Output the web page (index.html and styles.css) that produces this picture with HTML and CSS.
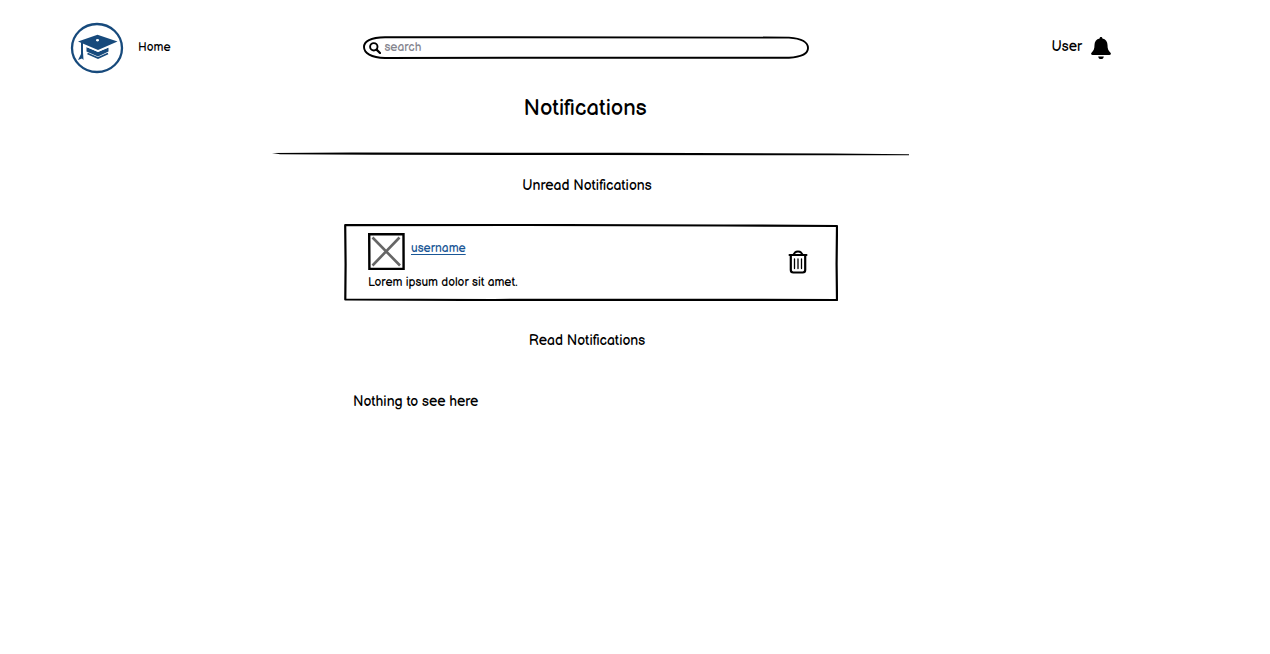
FILE: index.html
```html
<!DOCTYPE html>
<html lang="en">
<head>
  <meta charset="utf-8">
  <meta name="viewport" content="width=device-width, initial-scale=1">
  <title>Notifications</title>
  <link rel="stylesheet" href="styles.css">
</head>
<body>
  <div class="page">
    <header class="topbar">
      <nav class="topbar-nav">
        <a class="logo" href="#" aria-label="Home page">
          <svg class="logo-icon" viewBox="0 0 54 52" aria-hidden="true">
            <ellipse cx="27" cy="26" rx="25" ry="24" fill="none" stroke="#174a7c" stroke-width="2.300"/>
            <path fill="#174a7c" fill-rule="evenodd" d="M27.500 12.800 L47.500 19.500 L28 28 L8 19.500 Z M27.500 17 a1.600 1.200 0 1 0 .01 0 Z"/>
            <path fill="#174a7c" d="M16.500 25 L28 30 L38.500 25.500 V29.500 L28 34.500 L16.500 29.500 Z"/>
            <path fill="none" stroke="#fff" stroke-width="1" d="M15 24 L28 29.400 L41 24"/>
            <path fill="none" stroke="#174a7c" stroke-width="1.800" d="M17.500 31.500 L28 36 L38 31.500"/>
            <path fill="#174a7c" d="M11 20 L13 21 V30 L13.500 38 L12 36.500 L8 38 L11 32 Z"/>
          </svg>
        </a>
        <a class="nav-link" href="#">Home</a>
      </nav>
      <form class="search" role="search">
        <svg class="frame" viewBox="0 0 446 23" preserveAspectRatio="none" aria-hidden="true">
          <path d="M22 1.200 L426 1.600 C438 2.500 445 6 445 12 C445 18 438 21 426 21.700 L150 21.800 L22 22 C8 21.500 1 17 1 11 C1 5 9 1.500 22 1.200 Z" fill="#fff" stroke="#000" stroke-width="1.900"/>
        </svg>
        <svg class="search-icon" viewBox="0 0 12 12" aria-hidden="true">
          <circle cx="4.800" cy="4.800" r="3.700" fill="none" stroke="#000" stroke-width="1.900"/>
          <path d="M7.600 7.600 L11 11" stroke="#000" stroke-width="2.200" stroke-linecap="round"/>
        </svg>
        <input class="search-input" type="search" placeholder="search" aria-label="search">
      </form>
      <div class="account">
        <a class="account-link" href="#">User</a>
        <button class="icon-button" type="button" aria-label="Show notifications">
          <svg class="bell-icon" viewBox="0 0 20 22" aria-hidden="true">
            <path d="M10 0 C10.900 0 11.400 .6 11.400 1.600 C14.700 2.300 16.500 4.800 16.500 8 C16.500 12 17.300 13.500 19.300 15.500 C20.500 16.900 19.800 18 18.500 18 H1.500 C.2 18 -.5 16.900 .7 15.500 C2.700 13.500 3.500 12 3.500 8 C3.500 4.800 5.300 2.300 8.600 1.600 C8.600 .6 9.100 0 10 0 Z M7.200 19.400 H12.800 C12.700 21 11.600 22 10 22 C8.400 22 7.300 21 7.200 19.400 Z"/>
          </svg>
        </button>
      </div>
    </header>

    <main class="content">
      <h1 class="title">Notifications</h1>
      <svg class="rule" viewBox="0 0 638 4" preserveAspectRatio="none" aria-hidden="true">
        <path d="M0 .9 L80 .6 L350 .8 L560 1.600 L637 2.300 V3.300 L560 3.200 L320 3 L100 2.700 L8 2.200 Z"/>
      </svg>

      <section class="group">
        <h2 class="subtitle">Unread Notifications</h2>
        <article class="card">
          <svg class="frame" viewBox="0 0 494 77" preserveAspectRatio="none" aria-hidden="true">
            <path d="M1.200 1.200 L180 1 L380 1.500 L493 2 L492.600 40 L493 76 L250 75.800 L150 76 L1.300 75.500 L1.600 40 Z" fill="#fff" stroke="#000" stroke-width="2.200" stroke-linejoin="round"/>
          </svg>
          <div class="message">
            <div class="author">
              <svg class="avatar" viewBox="0 0 37 37" role="img" aria-label="Profile picture">
                <path d="M1.200 1.300 L35.500 1 L35.600 35.800 L1.400 36 Z" fill="#fff" stroke="#000" stroke-width="2.400"/>
                <path d="M4.500 4.500 L32 32.500 M31.500 4.500 L4.500 32.500" fill="none" stroke="#666" stroke-width="2.600"/>
              </svg>
              <a class="username" href="#">username</a>
            </div>
            <p class="message-text">Lorem ipsum dolor sit amet.</p>
          </div>
          <button class="icon-button" type="button" aria-label="Delete notification">
            <svg class="trash-icon" viewBox="0 0 20 24" fill="none" stroke="#000" stroke-linecap="round" aria-hidden="true">
              <path d="M1.500 5 H18.500 M5.500 4.500 L7 2.500 Q8 1.500 10 1.500 Q12 1.500 13 2.500 L14.500 4.500" stroke-width="2" stroke-linejoin="round"/>
              <path d="M2.800 5.500 V20 Q2.800 22.500 5.300 22.500 H14.700 Q17.200 22.500 17.200 20 V5.500" stroke-width="2.200"/>
              <path d="M6.500 9 V18.500 M10 9 V18.500 M13.500 9 V18.500" stroke-width="1.300"/>
            </svg>
          </button>
        </article>
      </section>

      <section class="group">
        <h2 class="subtitle">Read Notifications</h2>
        <p class="empty">Nothing to see here</p>
      </section>
    </main>
  </div>
</body>
</html>
```
FILE: styles.css
```css
* {
  box-sizing: border-box;
}

body {
  margin: 0;
  background: #fff;
  color: #000;
  font-family: "Balsamiq Sans", "Liberation Sans", Arial, sans-serif;
  font-size: 12px;
  line-height: 16px;
}

h1, h2, p {
  margin: 0;
  font-weight: 400;
}

svg {
  display: block;
}

.page {
  max-width: 1182px;
}

.topbar {
  display: grid;
  grid-template-columns: 36fr minmax(160px, 446px) 37fr;
  align-items: center;
  padding: 22px 71px 0 70px;
}

.topbar-nav,
.account {
  display: flex;
  align-items: center;
}

.topbar-nav {
  gap: 14px;
}

.account {
  justify-content: flex-end;
  gap: 9px;
}

.logo-icon {
  width: 54px;
  height: 52px;
}

.nav-link,
.account-link {
  color: #000;
  text-decoration: none;
}

.account-link {
  padding-bottom: 2px;
  font-size: 14px;
}

.icon-button {
  padding: 0;
  border: 0;
  background: none;
  cursor: pointer;
}

.bell-icon {
  width: 20px;
  height: 22px;
}

.frame {
  position: absolute;
  inset: 0;
  z-index: -1;
  width: 100%;
  height: 100%;
}

.search {
  position: relative;
  z-index: 0;
  display: flex;
  align-items: center;
  gap: 3px;
  height: 23px;
  margin-bottom: 1px;
  padding: 0 16px 0 6px;
}

.search-icon {
  flex: none;
  width: 12px;
  height: 12px;
}

.search-input {
  flex: 1;
  min-width: 0;
  padding: 0;
  border: 0;
  outline: 0;
  background: transparent;
  font: inherit;
}

.search-input::placeholder {
  color: #85858f;
  opacity: 1;
}

.content {
  display: flex;
  flex-direction: column;
  align-items: center;
  padding: 21px 16px;
}

.title {
  padding-right: 12px;
  font-size: 22px;
  line-height: 28px;
}

.rule {
  width: 100%;
  max-width: 638px;
  height: 4px;
  margin: 29px 0 21px;
}

.group {
  display: flex;
  flex-direction: column;
  width: 100%;
  max-width: 494px;
  margin-bottom: 31px;
}

.subtitle {
  padding-right: 8px;
  font-size: 14px;
  line-height: 18px;
  text-align: center;
}

.card {
  position: relative;
  z-index: 0;
  display: flex;
  align-items: center;
  justify-content: space-between;
  margin-top: 29px;
  padding: 9px 30px 10px 24px;
}

.author {
  display: flex;
  align-items: center;
  gap: 6px;
}

.avatar {
  width: 37px;
  height: 37px;
}

.username {
  padding-bottom: 6px;
  color: #1a5796;
  text-underline-offset: 2px;
}

.message-text {
  margin-top: 5px;
}

.trash-icon {
  width: 20px;
  height: 24px;
}

.empty {
  margin-top: 43px;
  padding-left: 9px;
  font-size: 14px;
  line-height: 18px;
}
```
